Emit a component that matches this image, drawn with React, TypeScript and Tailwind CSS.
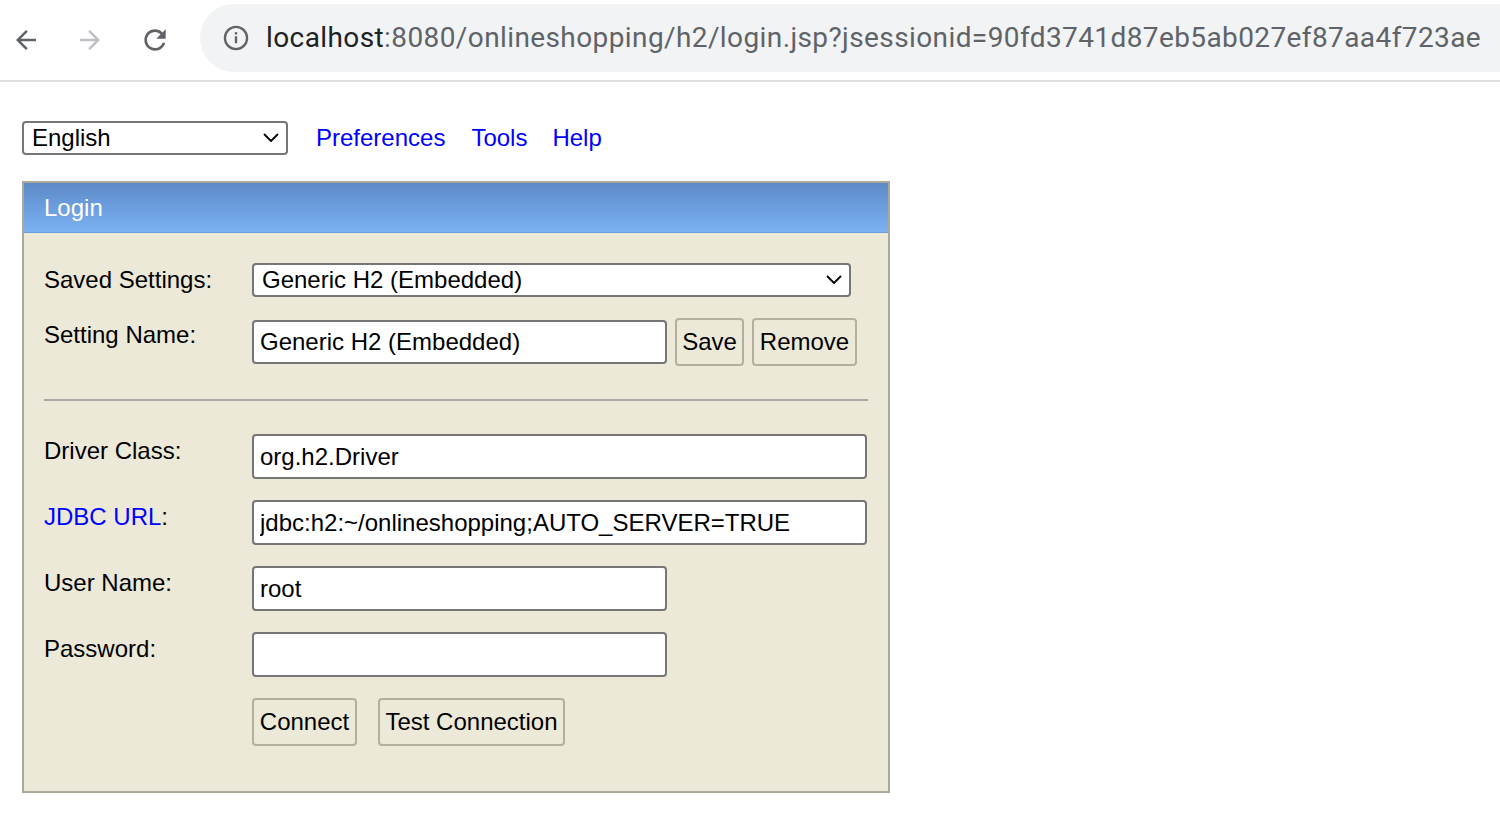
import React from 'react';

const font = { fontFamily: '"Liberation Sans", Arial, sans-serif' };

function Chevron({ className }: { className?: string }) {
  return (
    <svg className={className} width="16" height="10" viewBox="0 0 16 10" fill="none">
      <path d="M1.5 1.5 8 8l6.5-6.5" stroke="#000" strokeWidth="1.8" strokeLinecap="round" strokeLinejoin="round" />
    </svg>
  );
}

function Select({ value, width }: { value: string; width: string }) {
  return (
    <div className={`relative h-[34px] ${width} shrink-0`}>
      <select
        defaultValue={value}
        className="appearance-none w-full h-full bg-white border-2 border-[#767676] rounded-[4px] pl-[8px] text-[24px] leading-[28px] text-black outline-none"
        style={font}
      >
        <option>{value}</option>
      </select>
      <Chevron className="absolute right-[9px] top-[12px] pointer-events-none" />
    </div>
  );
}

function TextInput({ value, width, type = 'text' }: { value: string; width: string; type?: string }) {
  return (
    <input
      type={type}
      defaultValue={value}
      className={`${width} h-[45px] shrink-0 bg-white border-2 border-[#767676] rounded-[4px] pl-[6px] text-[24px] text-black outline-none`}
      style={font}
    />
  );
}

function Button({ label, width }: { label: string; width: string }) {
  return (
    <button
      className={`${width} h-[48px] shrink-0 bg-[#ece9d8] border-2 border-[#b4b0a0] rounded-[4px] text-[24px] text-black text-center`}
      style={font}
    >
      {label}
    </button>
  );
}

function Row({ label, children, blue }: { label: string; children: React.ReactNode; blue?: boolean }) {
  return (
    <div className="flex items-start">
      <div className="w-[208px] shrink-0 pt-[3px] text-[24px] leading-[28px] text-black">
        {blue ? (
          <>
            <span className="text-[#0000ff]">{label}</span>:
          </>
        ) : (
          label
        )}
      </div>
      {children}
    </div>
  );
}

export default function App() {
  return (
    <div className="min-h-[820px] bg-white overflow-hidden" style={font}>
      {/* browser bar */}
      <div className="h-[82px] flex items-center border-b-2 border-[#dedfe1] overflow-hidden">
        <div className="flex items-center shrink-0 pl-[11px]">
          <svg width="30" height="30" viewBox="0 0 24 24">
            <path d="M20 11H7.83l5.59-5.59L12 4l-8 8 8 8 1.41-1.41L7.83 13H20v-2z" fill="#5f6368" />
          </svg>
          <svg className="ml-[34px]" width="30" height="30" viewBox="0 0 24 24">
            <path d="M4 11h12.17l-5.59-5.59L12 4l8 8-8 8-1.41-1.41L16.17 13H4v-2z" fill="#bdc1c6" />
          </svg>
          <svg className="ml-[34px]" width="32" height="32" viewBox="0 0 24 24">
            <path
              d="M17.65 6.35C16.2 4.9 14.21 4 12 4c-4.42 0-7.99 3.58-7.99 8s3.57 8 7.99 8c3.730 0 6.84-2.55 7.73-6h-2.08c-.82 2.33-3.04 4-5.65 4-3.31 0-6-2.69-6-6s2.69-6 6-6c1.66 0 3.14.69 4.22 1.78L13 11h7V4l-2.35 2.35z"
              fill="#5f6368"
            />
          </svg>
        </div>
        <div className="ml-[29px] mt-[-4px] h-[68px] w-[1360px] shrink-0 rounded-full bg-[#f1f3f4] flex items-center pl-[22px]">
          <svg width="28" height="28" viewBox="0 0 24 24" fill="none">
            <circle cx="12" cy="12" r="9.5" stroke="#5f6368" strokeWidth="2" />
            <rect x="11" y="10.5" width="2" height="6" fill="#5f6368" />
            <rect x="11" y="7" width="2" height="2" fill="#5f6368" />
          </svg>
          <div
            className="ml-[16px] text-[28px] tracking-[0.4px] whitespace-nowrap text-[#5f6368]"
            style={{ fontFamily: 'Roboto, "Noto Sans", sans-serif' }}
          >
            <span className="text-[#202124]">localhost</span>:8080/onlineshopping/h2/login.jsp?jsessionid=90fd3741d87eb5ab027ef87aa4f723ae
          </div>
        </div>
      </div>

      {/* page */}
      <div className="pl-[22px] pt-[38px]">
        <div className="flex items-center">
          <Select value="English" width="w-[266px]" />
          <a href="#" className="ml-[28px] text-[24px] text-[#0000ff]">Preferences</a>
          <a href="#" className="ml-[26px] text-[24px] text-[#0000ff]">Tools</a>
          <a href="#" className="ml-[25px] text-[24px] text-[#0000ff]">Help</a>
        </div>

        <div className="mt-[25px] w-[868px] border-2 border-[#aca899] bg-[#ece9d8]">
          <div className="h-[50px] bg-gradient-to-b from-[#5d8ac8] to-[#7bb1f3] border-b border-[#6d9fe0] flex items-center pl-[20px] text-[24px] text-white">
            Login
          </div>

          <div className="pl-[20px] pt-[30px] pb-[45px]">
            <Row label="Saved Settings:">
              <Select value="Generic H2 (Embedded)" width="w-[599px]" />
            </Row>

            <div className="mt-[21px]">
              <Row label="Setting Name:">
                <div className="flex items-start gap-[8px]">
                  <input
                    defaultValue="Generic H2 (Embedded)"
                    className="mt-[2px] w-[415px] h-[44px] bg-white border-2 border-[#767676] rounded-[4px] pl-[6px] text-[24px] text-black outline-none"
                    style={font}
                  />
                  <Button label="Save" width="w-[69px]" />
                  <Button label="Remove" width="w-[105px]" />
                </div>
              </Row>
            </div>

            <div className="mt-[33px] mr-[20px] border-t-2 border-[#a8a8a8]" />

            <div className="mt-[33px] flex flex-col gap-[21px]">
              <Row label="Driver Class:">
                <TextInput value="org.h2.Driver" width="w-[615px]" />
              </Row>
              <Row label="JDBC URL" blue>
                <TextInput value="jdbc:h2:~/onlineshopping;AUTO_SERVER=TRUE" width="w-[615px]" />
              </Row>
              <Row label="User Name:">
                <TextInput value="root" width="w-[415px]" />
              </Row>
              <Row label="Password:">
                <TextInput value="" width="w-[415px]" type="password" />
              </Row>
              <div className="flex pl-[208px] gap-[21px]">
                <Button label="Connect" width="w-[105px]" />
                <Button label="Test Connection" width="w-[187px]" />
              </div>
            </div>
          </div>
        </div>
      </div>
    </div>
  );
}
